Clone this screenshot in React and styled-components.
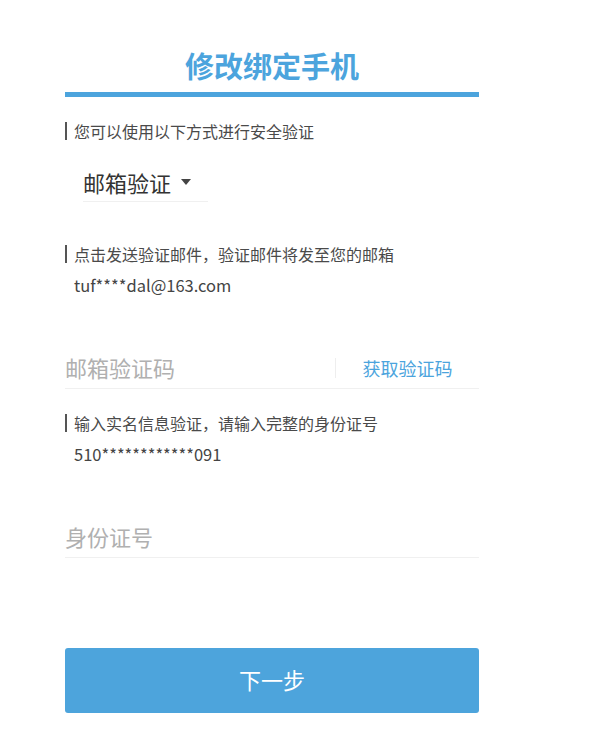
import React from "react";
import styled, { createGlobalStyle } from "styled-components";

const GlobalStyle = createGlobalStyle`
  body {
    margin: 0;
    background: #fff;
    font-family: "Noto Sans CJK SC", "Noto Sans", sans-serif;
  }
`;

const Page = styled.div`
  width: 414px;
  margin-left: 65px;
  padding-top: 45px;
`;

const Title = styled.h1`
  margin: 0;
  height: 40px;
  line-height: 40px;
  font-size: 29px;
  font-weight: 700;
  color: #4ca4dd;
  text-align: center;
  border-bottom: 5px solid #4ca4dd;
  padding-bottom: 7px;
  box-sizing: content-box;
`;

const Tip = styled.div`
  margin-top: ${(p) => p.$top}px;
  height: 18px;
  line-height: 18px;
  font-size: 16px;
  color: #4a4a4a;
  border-left: 2px solid #555;
  padding-left: 7px;
`;

const Select = styled.div`
  margin: 28px 0 0 18px;
  width: 125px;
  height: 28px;
  line-height: 28px;
  padding-bottom: 5px;
  border-bottom: 1px solid #f0f0f0;
  display: flex;
  align-items: center;
  gap: 10px;
  font-size: 22px;
  color: #333;
`;

const Caret = styled.span`
  width: 0;
  height: 0;
  border-left: 5px solid transparent;
  border-right: 5px solid transparent;
  border-top: 6px solid #444;
`;

const Value = styled.div`
  margin-top: 11px;
  padding-left: 9px;
  height: 22px;
  line-height: 22px;
  font-size: 16.5px;
  color: #444;
`;

const Field = styled.div`
  margin-top: 54px;
  height: 38px;
  display: flex;
  align-items: center;
  border-bottom: 1px solid #f0f0f0;
`;

const Input = styled.input`
  flex: 1;
  min-width: 0;
  border: none;
  outline: none;
  padding: 0 0 5px;
  font-family: inherit;
  font-size: 22px;
  color: #333;
  background: transparent;
  &::placeholder {
    color: #b0b0b0;
  }
`;

const CodeButton = styled.button`
  width: 144px;
  height: 20px;
  margin-bottom: 2px;
  border: none;
  border-left: 1px solid #eee;
  background: transparent;
  padding: 0;
  font-family: inherit;
  font-size: 18px;
  line-height: 18px;
  color: #4ca4dd;
  cursor: pointer;
`;

const NextButton = styled.button`
  display: block;
  width: 100%;
  height: 65px;
  margin-top: 90px;
  border: none;
  border-radius: 3px;
  padding: 0 0 3px;
  background: #4da4dc;
  color: #fff;
  font-family: inherit;
  font-size: 22px;
  cursor: pointer;
`;

export default function App() {
  return (
    <>
      <GlobalStyle />
      <Page>
        <Title>修改绑定手机</Title>
        <Tip $top={25}>您可以使用以下方式进行安全验证</Tip>
        <Select>
          邮箱验证
          <Caret />
        </Select>
        <Tip $top={43}>点击发送验证邮件，验证邮件将发至您的邮箱</Tip>
        <Value>tuf****dal@163.com</Value>
        <Field>
          <Input placeholder="邮箱验证码" />
          <CodeButton>获取验证码</CodeButton>
        </Field>
        <Tip $top={25}>输入实名信息验证，请输入完整的身份证号</Tip>
        <Value>510************091</Value>
        <Field>
          <Input placeholder="身份证号" />
        </Field>
        <NextButton>下一步</NextButton>
      </Page>
    </>
  );
}
